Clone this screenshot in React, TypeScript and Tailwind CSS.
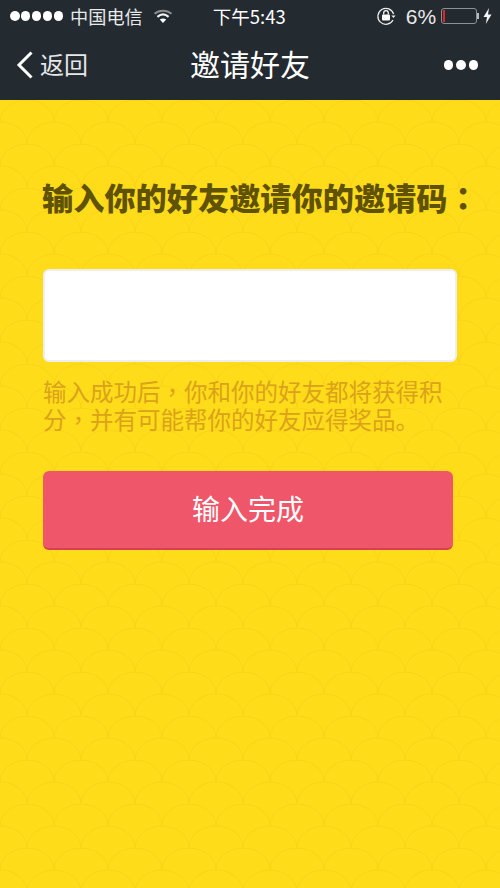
const FONT = "font-['Noto_Sans_CJK_SC','Noto_Sans',sans-serif]";

function Wifi() {
  return (
    <svg width="20" height="15" viewBox="0 0 20 15" fill="none">
      <path d="M1.500 4.800C6.200 0.600 13.800 0.600 18.500 4.800" stroke="#8b8f92" strokeWidth="2" />
      <path d="M4.400 7.800C8 4.800 12 4.800 15.600 7.800" stroke="#f2f2f2" strokeWidth="2.200" />
      <path d="M6.800 10.600C8.800 9.200 11.200 9.200 13.200 10.600L10 14Z" fill="#ffffff" />
    </svg>
  );
}

function RotationLock() {
  return (
    <svg width="20" height="20" viewBox="0 0 20 20" fill="none">
      <path d="M17.600 8.200A8 8 0 1 0 17 14" stroke="#eeeeee" strokeWidth="1.200" />
      <path d="M15.400 9.400L19.600 9.400L17.500 12Z" fill="#eeeeee" />
      <rect x="6" y="8.500" width="8" height="6" rx="1" fill="#ffffff" />
      <path d="M7.700 8.500V7a2.300 2.300 0 0 1 4.600 0v1.500" stroke="#ffffff" strokeWidth="1.200" />
    </svg>
  );
}

function StatusBar() {
  return (
    <div className="flex h-10 items-center pb-2 text-[#e8e9ea]">
      <div className="ml-[10px] flex w-[53px] justify-between">
        {[0, 1, 2, 3, 4].map((i) => (
          <span key={i} className="h-[9.500px] w-[9.500px] rounded-full bg-white" />
        ))}
      </div>
      <span className="ml-[7px] text-[18.200px] leading-none">中国电信</span>
      <span className="ml-[10px]"><Wifi /></span>
      <span className="ml-[40px] text-[18.500px] leading-none text-white">下午5:43</span>
      <span className="ml-[90px]"><RotationLock /></span>
      <span className="ml-[10px] font-['Liberation_Sans',sans-serif] text-[21px] leading-none">6%</span>
      <span className="ml-[5px] flex items-center">
        <span className="flex h-[16px] w-[36px] items-stretch rounded-[3px] border border-[#8d9192] p-px">
          <span className="w-[2px] bg-[#e0262c]" />
        </span>
        <span className="h-[6px] w-[2px] bg-[#b9bcbd]" />
      </span>
      <svg className="ml-[4px]" width="9" height="16" viewBox="0 0 9 16">
        <path d="M6 0L0.500 9H4L2.800 16L8.500 6.500H5Z" fill="#f5f5f5" />
      </svg>
    </div>
  );
}

function NavBar() {
  return (
    <div className="grid h-[60px] grid-cols-[1fr_auto_1fr] items-center pb-[10px]">
      <div className="flex items-center pl-[16px]">
        <svg width="18" height="30" viewBox="0 0 18 30" fill="none">
          <path d="M15.500 2.500L3 15L15.500 27.500" stroke="#ffffff" strokeWidth="3" />
        </svg>
        <span className="ml-[6px] -translate-y-px text-[24px] leading-none text-[#e6e7e8]">返回</span>
      </div>
      <span className="-translate-y-[2px] text-[30px] font-normal leading-none text-white">邀请好友</span>
      <div className="flex justify-end gap-[3px] pr-[22px]">
        <span className="h-[9.500px] w-[9.500px] rounded-full bg-white" />
        <span className="h-[9.500px] w-[9.500px] rounded-full bg-white" />
        <span className="h-[9.500px] w-[9.500px] rounded-full bg-white" />
      </div>
    </div>
  );
}

// faint scale pattern behind the yellow page
function Scales() {
  return (
    <svg className="pointer-events-none absolute inset-0 h-full w-full" aria-hidden="true">
      <defs>
        <pattern id="scales" width="54" height="44" patternUnits="userSpaceOnUse">
          <g fill="none" stroke="#f9d316" strokeWidth="1">
            <path d="M0 22A27 22 0 0 1 54 22" />
            <path d="M-27 44A27 22 0 0 1 27 44" />
            <path d="M27 44A27 22 0 0 1 81 44" />
          </g>
        </pattern>
      </defs>
      <rect width="100%" height="100%" fill="url(#scales)" />
    </svg>
  );
}

// centred full-width punctuation, the SC face sets it low and to the left
function Punct({ children }: { children: string }) {
  return <span className="font-['Noto_Sans_CJK_TC',sans-serif]">{children}</span>;
}

export default function App() {
  return (
    <div className={`flex h-[888px] w-[500px] flex-col overflow-hidden bg-[#ffdc19] ${FONT}`}>
      <div className="bg-[#232a30]">
        <StatusBar />
        <NavBar />
      </div>
      <div className="relative flex-1">
        <Scales />
        <div className="relative pl-[43px] pt-[77px]">
          <h1 className="-ml-[1px] whitespace-nowrap text-[31.200px] font-black leading-[40px] text-[#5f5205]">
            输入你的好友邀请你的邀请码<Punct>：</Punct>
          </h1>
          <input
            className="mt-[52px] block h-[93px] w-[414px] rounded-[6px] border-2 border-[#eeeeee] bg-white"
            aria-label="邀请码"
          />
          <p className="mt-[15px] w-[414px] text-[23.500px] leading-[28px] text-[#dba21a]">
            输入成功后<Punct>，</Punct>你和你的好友都将获得积分<Punct>，</Punct>并有可能帮你的好友应得奖品。
          </p>
          <button className="mt-[38px] flex h-[79px] w-[410px] items-center justify-center rounded-[6px] border-b-2 border-[#d93f52] bg-[#f05669] pb-[4px] text-[28px] text-white">
            输入完成
          </button>
        </div>
      </div>
    </div>
  );
}
